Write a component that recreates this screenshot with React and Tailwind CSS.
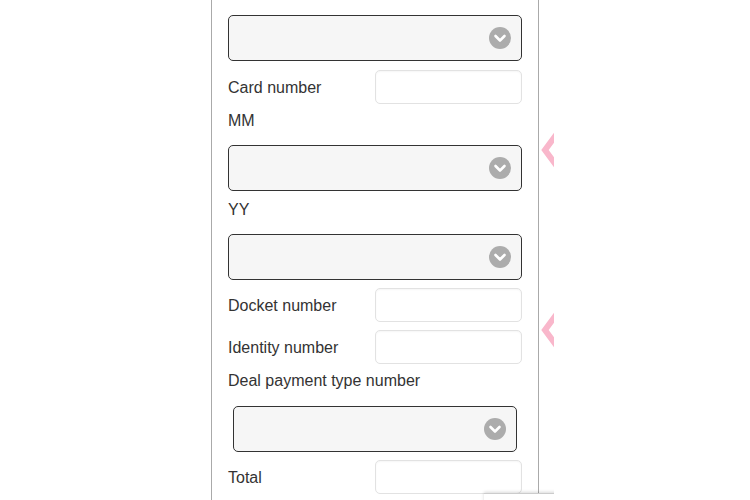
import React from "react";

function SelectBox({ className = "" }) {
  return (
    <div className={`h-[46px] rounded-[5px] border border-[#333] bg-[#f6f6f6] flex items-center justify-end pr-[10px] ${className}`}>
      <svg width="22" height="22" viewBox="0 0 22 22">
        <circle cx="11" cy="11" r="11" fill="#acacac" />
        <path d="M6.5 9 L11 13.5 L15.5 9" fill="none" stroke="#fff" strokeWidth="2.6" strokeLinecap="round" strokeLinejoin="round" />
      </svg>
    </div>
  );
}

function FieldRow({ label, className = "" }) {
  return (
    <div className={`grid grid-cols-2 items-center ${className}`}>
      <span className="text-[16px] text-[#333] pt-[2px]">{label}</span>
      <div className="h-[34px] rounded-[5px] border border-[#e2e2e2] bg-white shadow-[inset_0_1px_2px_rgba(0,0,0,0.04)]" />
    </div>
  );
}

function Label({ text, className = "" }) {
  return <div className={`h-[20px] leading-[20px] text-[16px] text-[#333] pt-[1px] ${className}`}>{text}</div>;
}

function PinkChevron({ className = "" }) {
  return (
    <svg className={`absolute left-[327px] ${className}`} width="20" height="40" viewBox="0 0 20 40">
      <path d="M21 1 L7 20 L21 39" fill="none" stroke="#f9b7cb" strokeWidth="6" />
    </svg>
  );
}

export default function App() {
  return (
    <div className="w-[750px] h-[500px] overflow-hidden bg-white" style={{ fontFamily: '"Liberation Sans", Arial, sans-serif' }}>
      <div className="relative ml-[211px] w-[343px] h-[500px] overflow-hidden">
        <div className="w-[328px] h-full border-x border-[#aaa] px-[16px] pt-[15px] flex flex-col">
          <SelectBox />
          <FieldRow label="Card number" className="mt-[9px]" />
          <Label text="MM" className="mt-[6px]" />
          <SelectBox className="mt-[15px]" />
          <Label text="YY" className="mt-[8px]" />
          <SelectBox className="mt-[15px]" />
          <FieldRow label="Docket number" className="mt-[8px]" />
          <FieldRow label="Identity number" className="mt-[8px]" />
          <Label text="Deal payment type number" className="mt-[6px]" />
          <SelectBox className="mt-[16px] mx-[5px]" />
          <FieldRow label="Total" className="mt-[8px]" />
        </div>
        <PinkChevron className="top-[130px]" />
        <PinkChevron className="top-[310px]" />
        <div className="absolute left-[273px] top-[493px] w-[80px] h-[20px] bg-white border-t border-[#ccc] shadow-[0_-1px_3px_rgba(0,0,0,0.15)]" />
      </div>
    </div>
  );
}
